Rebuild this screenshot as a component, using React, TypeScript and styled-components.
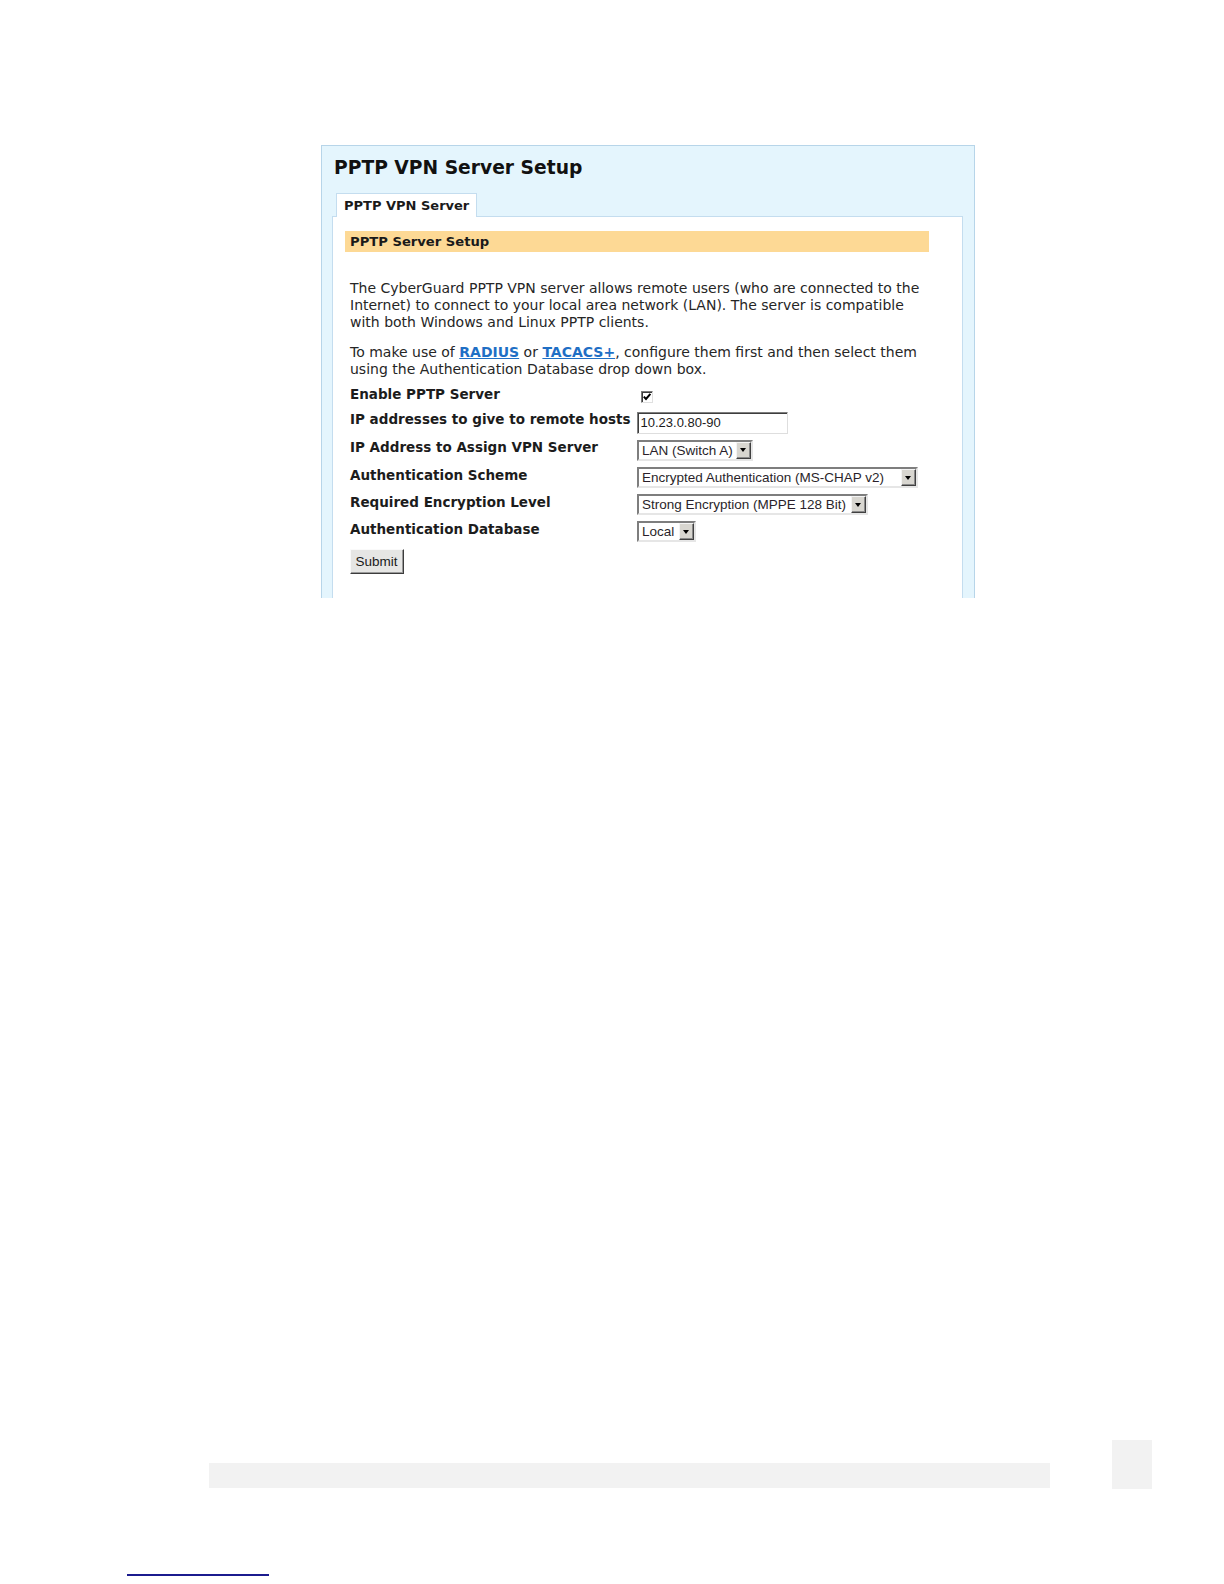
import React from "react";
import styled, { createGlobalStyle } from "styled-components";

const GlobalStyle = createGlobalStyle`
  html, body {
    margin: 0;
    padding: 0;
    background: #ffffff;
  }
  body {
    font-family: "DejaVu Sans", Verdana, sans-serif;
    color: #1c1c1c;
  }
`;

const Page = styled.div`
  display: flex;
  flex-direction: column;
  padding-top: 145px;
  min-height: 1584px;
  box-sizing: border-box;
`;

const Panel = styled.section`
  box-sizing: border-box;
  margin-left: 321px;
  width: 654px;
  height: 453px;
  display: flex;
  flex-direction: column;
  padding: 10.5px 11.5px 0 10px;
  background: #e4f5fd;
  border: 1px solid #b7d5e9;
  border-bottom: none;
`;

const Title = styled.h1`
  margin: 0 0 14px 2px;
  font-size: 18.7px;
  line-height: 22px;
  font-weight: bold;
  color: #111;
`;

const TabRow = styled.div`
  display: flex;
  padding-left: 4px;
  position: relative;
  z-index: 1;
  margin-bottom: -1px;
`;

const Tab = styled.div`
  height: 23px;
  padding: 0 7px;
  display: flex;
  align-items: center;
  background: #ffffff;
  border: 1px solid #c4ddef;
  border-bottom: none;
  font-size: 13px;
  font-weight: bold;
  color: #1a1a1a;
`;

const Content = styled.div`
  flex: 1;
  background: #ffffff;
  border: 1px solid #c4ddef;
  border-bottom: none;
  padding: 14.5px 33px 0 11.5px;
`;

const SectionBar = styled.div`
  height: 21px;
  display: flex;
  align-items: center;
  padding-left: 5.5px;
  background: #fdd995;
  font-size: 13.15px;
  font-weight: bold;
  color: #1a1a1a;
`;

const Body = styled.div`
  padding-left: 5.5px;
`;

const Paragraph = styled.p<{ $top: number }>`
  margin: ${(p) => p.$top}px 0 0 0;
  font-size: 14px;
  line-height: 16.9px;
  color: #262626;
  white-space: nowrap;
`;

const Link = styled.a`
  color: #1f6fc5;
  font-weight: bold;
  text-decoration: underline;
`;

const Form = styled.div`
  margin-top: 8.5px;
  display: grid;
  grid-template-columns: 287px auto;
  row-gap: 6.2px;
  justify-items: start;
  align-items: start;
`;

const Label = styled.div`
  font-size: 13.5px;
  line-height: 17px;
  font-weight: bold;
  color: #1c1c1c;
  white-space: nowrap;
  margin-top: -0.5px;
`;

const CheckCell = styled.div`
  height: 19px;
`;

const Checkbox = styled.span`
  display: block;
  box-sizing: border-box;
  width: 12px;
  height: 12px;
  margin: 4.5px 0 0 4px;
  background: #fff;
  border: 1px solid;
  border-color: #7a7a7a #e0e0e0 #e0e0e0 #7a7a7a;
  box-shadow: inset 1px 1px 0 #3c3c3c;
  svg {
    display: block;
  }
`;

const TextInput = styled.div`
  box-sizing: border-box;
  width: 151px;
  height: 22px;
  padding-left: 2.5px;
  display: flex;
  align-items: center;
  background: #fff;
  border: 1px solid;
  border-color: #7e7e7e #dedede #dedede #7e7e7e;
  box-shadow: inset 1px 1px 0 #3e3e3e;
  font-family: "Liberation Sans", Arial, sans-serif;
  font-size: 13px;
  color: #1a1a1a;
`;

const SelectBox = styled.div<{ $width: number }>`
  box-sizing: border-box;
  width: ${(p) => p.$width}px;
  height: 21px;
  display: flex;
  align-items: stretch;
  background: #fff;
  border: 2px solid;
  border-color: #7e7e7e #e6e6e6 #e6e6e6 #7e7e7e;
  font-family: "Liberation Sans", Arial, sans-serif;
  font-size: 13.5px;
  color: #2a1f2a;
`;

const SelectValue = styled.span`
  flex: 1;
  padding-left: 3px;
  display: flex;
  align-items: center;
  white-space: nowrap;
  overflow: hidden;
`;

const ArrowButton = styled.span`
  box-sizing: border-box;
  width: 15px;
  display: flex;
  align-items: center;
  justify-content: center;
  background: #d8d6d0;
  border: 1px solid;
  border-color: #f4f4f4 #404040 #404040 #f4f4f4;
  box-shadow: inset -1px -1px 0 #8a8a8a;
`;

const Triangle = styled.span`
  width: 0;
  height: 0;
  border-left: 3.5px solid transparent;
  border-right: 3.5px solid transparent;
  border-top: 4px solid #000;
  margin-right: 1px;
`;

const SubmitButton = styled.button`
  grid-column: 1 / span 2;
  box-sizing: border-box;
  width: 54px;
  height: 25px;
  margin-left: -0.5px;
  padding: 0;
  background: #e6e6e4;
  border: 1px solid;
  border-color: #fafafa #3c3c3c #3c3c3c #fafafa;
  box-shadow: inset -1px -1px 0 #9a9a9a;
  font-family: "Liberation Sans", Arial, sans-serif;
  font-size: 13.5px;
  color: #1a1a1a;
`;

const Footer = styled.div`
  margin-top: 842px;
  display: flex;
  align-items: flex-end;
  padding-left: 209px;
  gap: 62px;
`;

const FooterBar = styled.div`
  width: 841px;
  height: 25px;
  margin-bottom: 1px;
  background: #f2f2f2;
`;

const PageTab = styled.div`
  width: 40px;
  height: 49px;
  background: #f2f2f2;
`;

const Rule = styled.div`
  margin: 85px 0 0 127px;
  width: 142px;
  height: 2px;
  background: #1b1b8e;
`;

const Select: React.FC<{ value: string; width: number }> = ({ value, width }) => (
  <SelectBox $width={width}>
    <SelectValue>{value}</SelectValue>
    <ArrowButton>
      <Triangle />
    </ArrowButton>
  </SelectBox>
);

const App: React.FC = () => {
  return (
    <Page>
      <GlobalStyle />
      <Panel>
        <Title>PPTP VPN Server Setup</Title>
        <TabRow>
          <Tab>PPTP VPN Server</Tab>
        </TabRow>
        <Content>
          <SectionBar>PPTP Server Setup</SectionBar>
          <Body>
            <Paragraph $top={28}>
              The CyberGuard PPTP VPN server allows remote users (who are connected to the
              <br />
              Internet) to connect to your local area network (LAN). The server is compatible
              <br />
              with both Windows and Linux PPTP clients.
            </Paragraph>
            <Paragraph $top={13.5}>
              To make use of <Link>RADIUS</Link> or <Link>TACACS+</Link>, configure them first and then select them
              <br />
              using the Authentication Database drop down box.
            </Paragraph>
            <Form>
              <Label>Enable PPTP Server</Label>
              <CheckCell>
                <Checkbox>
                  <svg width="10" height="10" viewBox="0 0 10 10">
                    <path d="M1.8 4.6 L4 7 L8.4 1.8" fill="none" stroke="#000" strokeWidth="2" />
                  </svg>
                </Checkbox>
              </CheckCell>

              <Label>IP addresses to give to remote hosts</Label>
              <TextInput>10.23.0.80-90</TextInput>

              <Label>IP Address to Assign VPN Server</Label>
              <Select value="LAN (Switch A)" width={116} />

              <Label>Authentication Scheme</Label>
              <Select value="Encrypted Authentication (MS-CHAP v2)" width={281} />

              <Label>Required Encryption Level</Label>
              <Select value="Strong Encryption (MPPE 128 Bit)" width={231} />

              <Label>Authentication Database</Label>
              <Select value="Local" width={59} />

              <SubmitButton type="button">Submit</SubmitButton>
            </Form>
          </Body>
        </Content>
      </Panel>
      <Footer>
        <FooterBar />
        <PageTab />
      </Footer>
      <Rule />
    </Page>
  );
};

export default App;
